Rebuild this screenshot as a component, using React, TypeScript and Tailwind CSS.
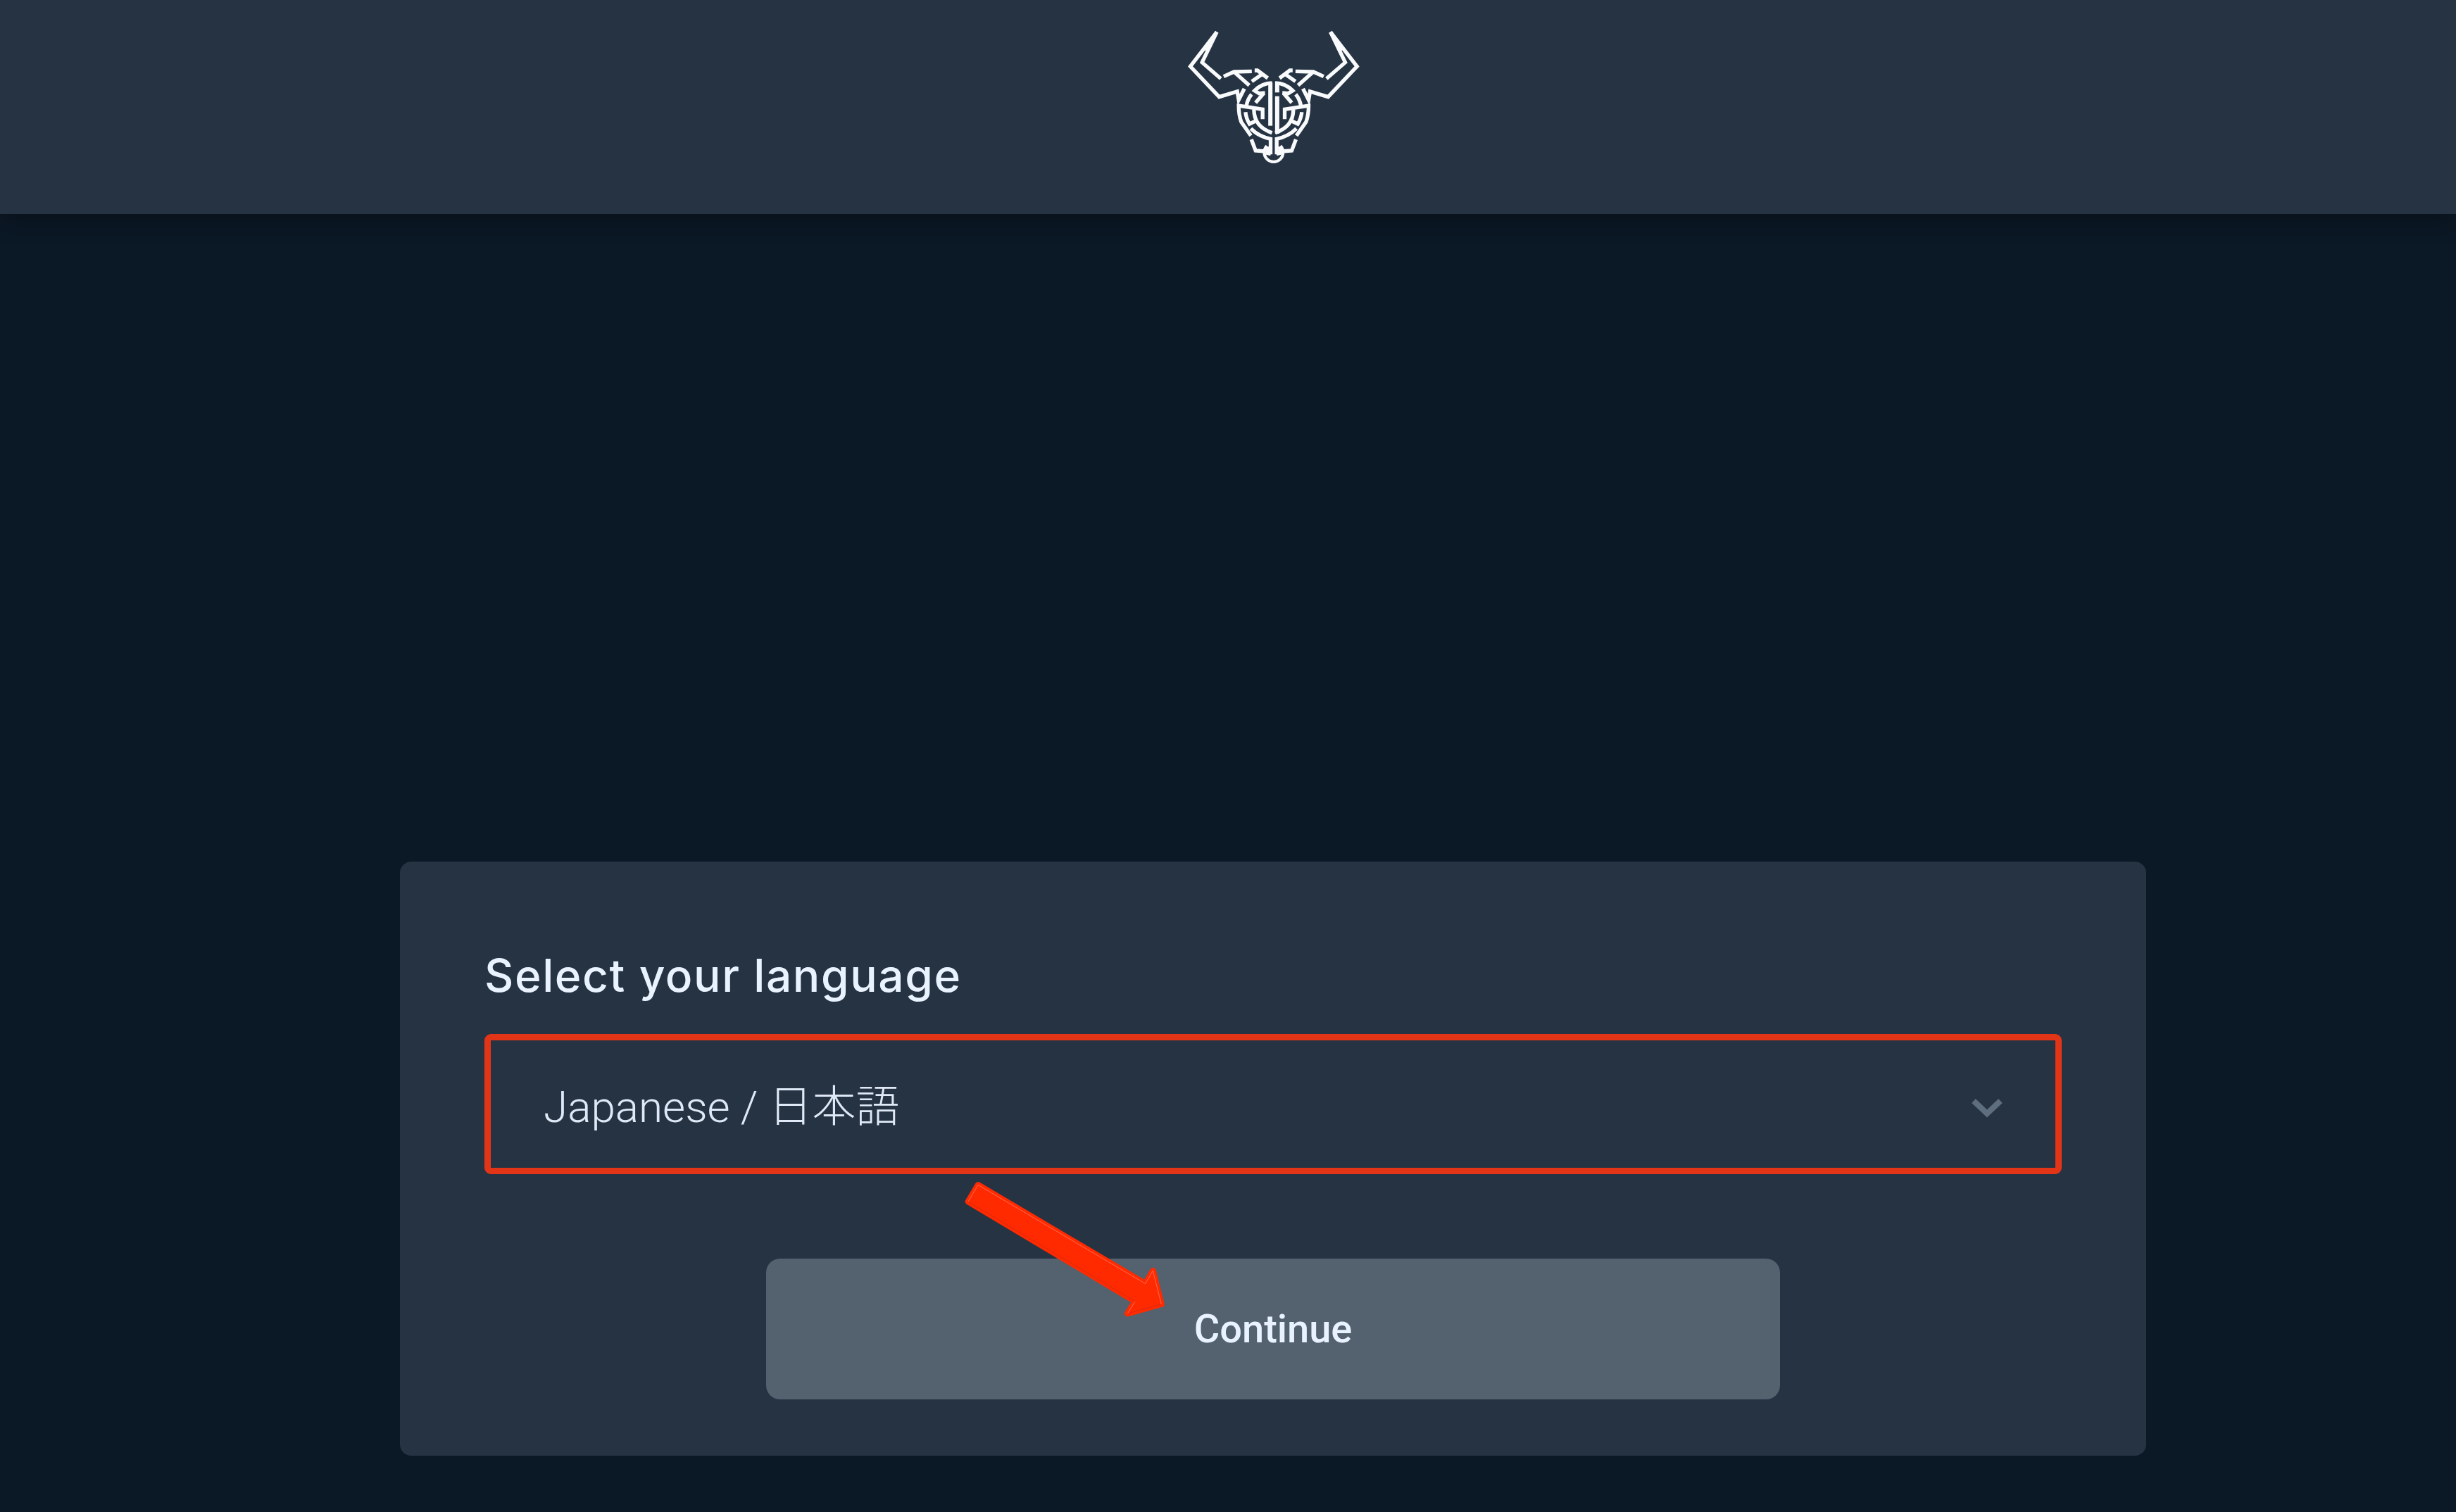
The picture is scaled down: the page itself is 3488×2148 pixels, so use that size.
const strokes = [
  // horn
  "M177 46 L64 193 L187 323 L264 300 L270 336 L294 288",
  "M177 46 L114 176 L194 245",
  "M170 58 L126 124",
  // brow
  "M206 236 L250 216 L326 214",
  "M250 216 L315 274",
  "M338 210 L350 210 L394 243",
  "M370 226 L326 257",
  // forehead
  "M412 264 Q370 264 338 296 L357 308 L382 306",
  "M376 308 L342 348",
  "M325 312 Q308 332 303 360",
  // cheek
  "M372 418 L372 376 L270 360 Q270 400 281 430 L322 488",
  "M299 388 Q302 416 316 438 L342 426",
  "M335 378 Q336 450 412 476",
  "M322 458 Q356 492 406 502 L406 568",
  // jaw
  "M324 504 L342 552 L384 555",
  "M392 535 L392 562 L407 566",
];

function BullLogo() {
  return (
    <svg viewBox="0 0 836 660" className="h-[220px] w-[279px]" fill="none" stroke="#f8fafc" strokeWidth="16" role="img" aria-label="Bull logo">
      <g>
        {strokes.map((d) => (
          <path key={d} d={d} />
        ))}
      </g>
      <g transform="translate(838 0) scale(-1 1)">
        {strokes.map((d) => (
          <path key={d} d={d} />
        ))}
      </g>
      <path d="M405 262 V446" strokeWidth="18" />
      <path d="M434 320 V480" strokeWidth="18" />
      <path d="M434 258 V304" strokeWidth="18" />
      <path d="M390 532 A40 40 0 1 0 448 532" strokeWidth="13" />
    </svg>
  );
}

function PointerArrow() {
  return (
    <svg viewBox="0 0 1080 720" className="pointer-events-none absolute left-[762px] top-[436px] h-[240px] w-[360px]" aria-hidden="true">
      <path
        d="M177 70 L890 491 L922 436 L958 578 L814 618 L846 566 L135 141 Z"
        fill="#ff2a00"
        stroke="#ff2a00"
        strokeWidth="26"
        strokeLinejoin="round"
      />
      <path d="M135 141 L177 70 L890 491 L922 436 L958 578 M846 566 L814 618" fill="none" stroke="#ff6a50" strokeWidth="3" />
      <path d="M135 141 L846 566 M814 618 L958 578" fill="none" stroke="#c02a14" strokeWidth="2" />
    </svg>
  );
}

export default function App() {
  return (
    <div className="flex min-h-screen flex-col bg-[#0b1825] font-['Roboto','Noto_Sans_CJK_JP',sans-serif] text-[#e9f2ff]">
      <header className="flex h-[304px] justify-center bg-[#263343] pl-32 pt-[30px] shadow-[0_8px_32px_rgba(0,0,0,0.3)]">
        <BullLogo />
      </header>
      <main className="flex flex-1 flex-col items-center justify-end pb-20 pl-32">
        <form className="relative flex w-full max-w-[2480px] flex-col rounded-2xl bg-[#263343] px-[120px] pb-20 pt-[120px]">
          <label htmlFor="language" className="font-['Inter',sans-serif] text-[64px] font-medium leading-[84px] tracking-wide">
            Select your language
          </label>
          <div className="relative mt-[41px]">
            <select
              id="language"
              defaultValue="ja"
              className="h-[199px] w-full appearance-none rounded-[9px] border-[9px] border-[#e23518] bg-[#263343] px-[75px] pt-2 text-[62px] font-light text-[#dfe9f6] outline-none"
            >
              <option value="ja">Japanese / 日本語</option>
              <option value="en">English</option>
            </select>
            <svg viewBox="0 0 44 28" className="pointer-events-none absolute right-[84px] top-[91px] h-[28px] w-[44px]" fill="none" stroke="#5f6e7e" strokeWidth="8" aria-hidden="true">
              <path d="M3 4 L22 22 L41 4" />
            </svg>
          </div>
          <button type="button" className="mx-auto mt-[120px] h-[200px] w-full max-w-[1440px] rounded-[20px] bg-[#53626e] text-[56px] font-medium">
            Continue
          </button>
          <PointerArrow />
        </form>
      </main>
    </div>
  );
}
